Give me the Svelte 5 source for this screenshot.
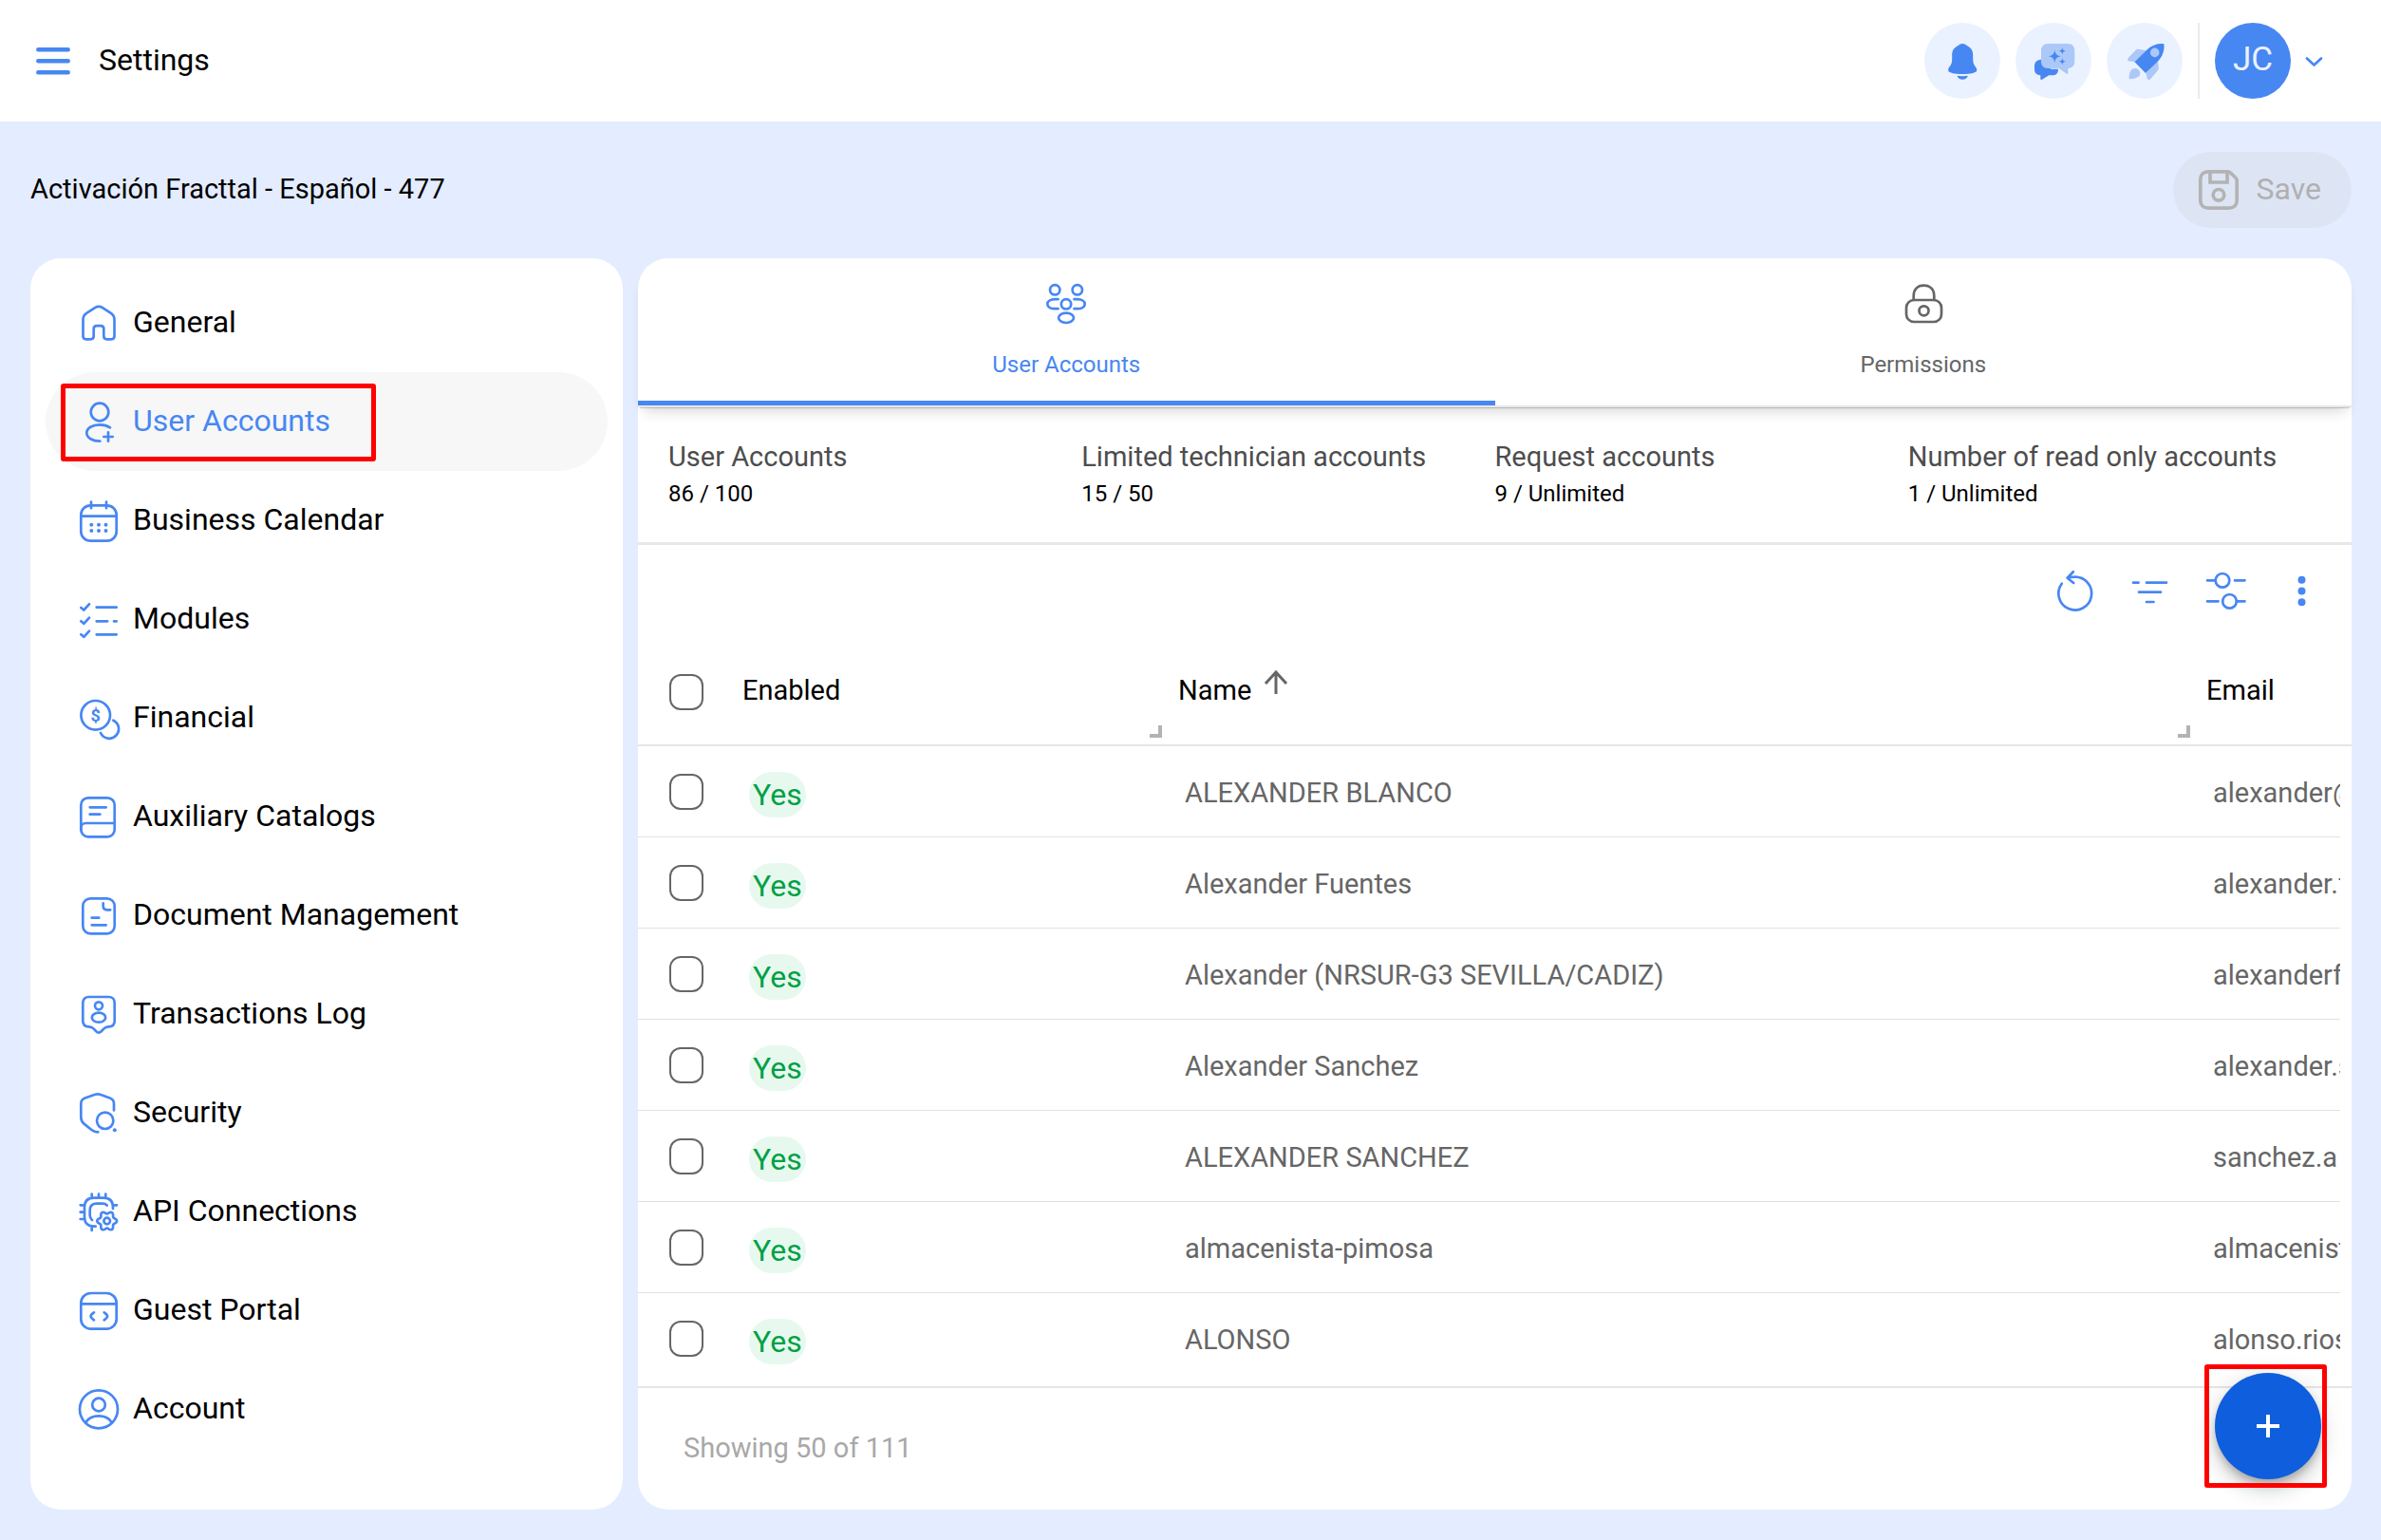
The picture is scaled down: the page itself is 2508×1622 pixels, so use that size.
<script>
	const navItems = [
		"General",
		"User Accounts",
		"Business Calendar",
		"Modules",
		"Financial",
		"Auxiliary Catalogs",
		"Document Management",
		"Transactions Log",
		"Security",
		"API Connections",
		"Guest Portal",
		"Account",
	];

	const stats = [
		{ label: "User Accounts", value: "86 / 100" },
		{ label: "Limited technician accounts", value: "15 / 50" },
		{ label: "Request accounts", value: "9 / Unlimited" },
		{ label: "Number of read only accounts", value: "1 / Unlimited" },
	];

	const users = [
		{ name: "ALEXANDER BLANCO", email: "alexander@" },
		{ name: "Alexander Fuentes", email: "alexander.f" },
		{ name: "Alexander (NRSUR-G3 SEVILLA/CADIZ)", email: "alexanderf" },
		{ name: "Alexander Sanchez", email: "alexander.s" },
		{ name: "ALEXANDER SANCHEZ", email: "sanchez.a" },
		{ name: "almacenista-pimosa", email: "almacenist" },
		{ name: "ALONSO", email: "alonso.rios" },
	];

	let active = $state("User Accounts");
	let tab = $state("accounts");
	let selected = $state([]);

	// outline of a cog with six soft teeth
	function gear(cx, cy, r, depth) {
		let d = "";
		for (let a = 0; a < 360; a += 6) {
			const t = (a * Math.PI) / 180;
			const rr = r + depth * Math.cos(6 * t);
			d += `${a ? "L" : "M"}${(cx + rr * Math.cos(t)).toFixed(2)} ${(cy + rr * Math.sin(t)).toFixed(2)}`;
		}
		return d + "z";
	}

	function toggleAll(e) {
		selected = e.target.checked ? users.map((u) => u.name) : [];
	}
</script>

{#snippet navIcon(name)}
	<svg class="icon" viewBox="0 0 48 48" aria-hidden="true">
		{#if name === "General"}
			<path d="M7.5 38V20.5c0-3 1.5-5.2 4-6.8l8.5-5.6c2.6-1.6 5.4-1.6 8 0l8.5 5.6c2.5 1.6 4 3.8 4 6.800V38c0 2-1.3 3.3-3.3 3.3h-4.6c-2 0-3.3-1.3-3.3-3.3v-7.6c0-2-1.3-3.3-3.3-3.3h-4c-2 0-3.3 1.3-3.3 3.3V38c0 2-1.3 3.3-3.3 3.3h-4.6c-2 0-3.3-1.3-3.3-3.3z" />
		{:else if name === "User Accounts"}
			<circle cx="25" cy="14" r="9.3" />
			<path d="M36 30.3c-3-2-7-3-11-3-7.5 0-13.7 3.6-13.7 8.7s6.2 8.7 14 8.7M34 35.3v9.4M29.3 40h9.4" />
		{:else if name === "Business Calendar"}
			<rect x="5.3" y="8.3" width="37.4" height="37.4" rx="10" />
			<path d="M5.3 19.7h37.4M16 4.7v6.5M32 4.7v6.5" />
			<g class="solid">
				<circle cx="16.3" cy="28.7" r="2" /><circle cx="24" cy="28.7" r="2" /><circle cx="31.5" cy="28.7" r="2" />
				<circle cx="16.3" cy="35" r="2" /><circle cx="24" cy="35" r="2" /><circle cx="31.5" cy="35" r="2" />
			</g>
		{:else if name === "Modules"}
			<path d="M5.3 12l3 2.5L14 8.3M5.3 26.3l3 2.5L14 22.6M5.3 40.3l3 2.5L14 36.6M21.7 11.7h21M21.7 26.3h11.5M40 26.3h2.7M21.7 40.3h21" />
		{:else if name === "Financial"}
			<circle cx="20.7" cy="21.3" r="15.3" />
			<path d="M39.3 26.7a10 10 0 1 1-13.3 13.3" />
			<text x="20.7" y="27.5" text-anchor="middle">$</text>
		{:else if name === "Auxiliary Catalogs"}
			<rect x="5.3" y="4.3" width="35.4" height="41" rx="7.5" />
			<path d="M5.3 38v-2c0-3 2-5 5-5h30.4M14.7 14.3h17M14.7 21.7h10.6" />
		{:else if name === "Document Management"}
			<rect x="7.3" y="6.3" width="33.4" height="37" rx="8" />
			<path d="M28.7 11.3v3c0 2.5 1.5 4 4 4h3.5M16.7 26.7h7.6M16.7 34.3h15" />
		{:else if name === "Transactions Log"}
			<path d="M13.5 6h21c3.8 0 6.2 2.4 6.2 6.2v19c0 3.8-2.4 6-6.2 6.2-2 .1-3.5.5-5 2l-2.8 2.9c-1.7 1.7-3.7 1.7-5.4 0l-2.8-2.9c-1.5-1.5-3-1.9-5-2-3.8-.2-6.2-2.4-6.2-6.2v-19C7.3 8.4 9.7 6 13.5 6z" />
			<circle cx="24" cy="15.3" r="4" />
			<ellipse cx="24" cy="27.7" rx="7.2" ry="5" />
		{:else if name === "Security"}
			<path d="M40 21.5v-7c0-3-1.5-5-4.3-6L25.5 4.8c-1.8-.7-3.5-.7-5.3 0L9.6 8.5c-2.8 1-4.3 3-4.3 6v14.3c0 3 1 5 3.2 6.8l8.3 6.7c2 1.6 3.7 2.1 6.5 2" />
			<circle cx="30.7" cy="32.3" r="8.7" />
			<circle class="solid" cx="40.8" cy="42.3" r="2" />
		{:else if name === "API Connections"}
			<path d="M20.7 39.7H19c-6.5 0-10-3.5-10-10V19.7c0-6.5 3.5-10 10-10h10c6.5 0 10 3.5 10 10v1.3M16.7 5.7v4M24 5.7v4M31.3 5.7v4M4.7 17.3H9M4.7 24.7H9M4.7 32H9M39 17.3h4M16.7 39.5V44" />
			<path d="M32.7 17.5c-1.3-1.3-2.5-1.8-4.7-1.8h-6c-5 0-7.3 2.3-7.3 7.3v5c0 2.2.6 3.7 2.3 5" />
			<path d={gear(32.7, 34, 9, 1.4)} />
			<circle cx="32.7" cy="34" r="3.3" />
		{:else if name === "Guest Portal"}
			<rect x="5.3" y="6" width="37.4" height="37.7" rx="10.5" />
			<path d="M5.3 17.3h37.4M19 26.3c-4.6 3-4.6 5 0 8M29.7 26.3c4.6 3 4.6 5 0 8" />
		{:else}
			<circle cx="24" cy="24.3" r="20" />
			<circle cx="24" cy="19.5" r="6.8" />
			<path d="M10.7 37.7c2.5-4 7.3-6.3 13.3-6.3s10.8 2.3 13.3 6.3" />
		{/if}
	</svg>
{/snippet}

<div class="page">
	<header>
		<button class="plain" aria-label="Menu">
			<svg class="icon" viewBox="0 0 48 48">
				<path class="thick" d="M8.3 12.3h31.4M8.3 24.3h31.4M8.3 36.3h31.4" />
			</svg>
		</button>
		<h1>Settings</h1>
		<div class="actions">
			<button class="round" aria-label="Notifications">
				<svg viewBox="0 0 48 48" width="48" height="48" fill="#4787f2">
					<path d="M24.2 6c2 0 3.3 1 4.5 1.9 4.2 2 6.5 5.1 6.5 9.6v5c0 7 4.1 7.5 4.1 11.5 0 2.5-6.1 4-15.1 4s-15.1-1.5-15.1-4c0-4 4.100-4.5 4.100-11.5v-5c0-4.5 2.300-7.6 6.500-9.6C20.9 7 22.200 6 24.200 6z" />
					<path d="M18.5 39.700c3.7.6 7.7.6 11.4 0-.7 2.500-3 4-5.700 4s-5-1.500-5.700-4z" />
				</svg>
			</button>
			<button class="round" aria-label="Assistant">
				<svg viewBox="0 0 48 48" width="48" height="48" fill="#4787f2">
					<path d="M12 22.7h9v10h8c0 4.3-2 6.5-5.5 6.5h-4.200L12 43.700c-.9.500-1.700.2-1.700-.8v-3.700C6.500 39 4 37 4 33v-3.500c0-4.300 3-6.800 8-6.800z" />
					<path fill="#abc8f8" d="M18.5 6h20.300c4.800 0 7.500 2.700 7.500 7.500v11c0 4.500-2.300 7.200-6.900 7.500v4.800c0 1-.7 1.400-1.500.9L29.500 32h-11c-4.800 0-7.500-2.700-7.500-7.500v-11C11 8.700 13.700 6 18.500 6z" />
					<path d="M25.300 12.500c.9 4.800 2 5.900 6.800 6.800-4.800.9-5.900 2-6.800 6.800-.9-4.800-2-5.900-6.800-6.800 4.800-.9 5.900-2 6.800-6.800zM33.300 10.200c.5 2.400 1.100 3 3.500 3.500-2.400.5-3 1.100-3.500 3.500-.5-2.400-1.100-3-3.500-3.500 2.400-.5 3-1.100 3.500-3.500zM33.300 21.200c.5 2.400 1.100 3 3.500 3.500-2.400.5-3 1.100-3.500 3.500-.5-2.400-1.100-3-3.500-3.500 2.400-.5 3-1.100 3.500-3.500z" />
				</svg>
			</button>
			<button class="round" aria-label="What's new">
				<svg viewBox="0 0 48 48" width="48" height="48" fill="#abc8f8">
					<path d="M25.500 12.900l-8.300-1.200c-1-.1-1.600.2-2.300.9L7 20.700c-1.800 2-.9 3.600 1.500 3.900l5.500.6zM37.800 22.500l1 9c.1 1.200-.2 2-1 2.800l-7.300 8.700c-1.800 2-4.200 1-4.200-1.700L25.500 37zM8.700 43.200c-1.100 0-1.200-.5-1.100-1.500.2-5.700 2-9.700 6.400-9.700 3 0 5.300 2.300 5.300 5.300 0 4-4.600 5.600-10.600 5.900z" />
					<path fill="#4787f2" d="M13.500 25.300L26.800 12C32 7.300 37.600 5.700 43 6c1.100.1 1.400.4 1.500 1.500.3 5.600-1.300 11.200-6 16.400L25 37z" />
					<circle cx="34.700" cy="15.400" r="4.800" />
				</svg>
			</button>
			<span class="divider"></span>
			<button class="avatar">JC</button>
			<button class="plain" aria-label="Account menu">
				<svg class="icon" viewBox="0 0 48 48"><path d="M17 21.5l7.500 7 7.500-7" /></svg>
			</button>
		</div>
	</header>

	<div class="subheader">
		<h2>Activación Fracttal - Español - 477</h2>
		<button class="save" disabled>
			<svg viewBox="0 0 48 48" width="48" height="48" fill="none" stroke="#b3b3b3" stroke-width="3.7">
				<path d="M34.3 4.8H13c-5 0-8.2 3.2-8.2 8.2v22c0 5 3.2 8.2 8.2 8.2h22c5 0 8.2-3.2 8.2-8.2V13.7c0-2-8-8.900-8.900-8.900z" />
				<path d="M15 4.8V16h18V4.8" />
				<circle cx="24" cy="29.3" r="5.8" />
			</svg>
			<span class="label">Save</span>
		</button>
	</div>

	<main>
		<nav class="card">
			{#each navItems as item}
				<a
					href="#{item.toLowerCase().replaceAll(' ', '-')}"
					class:active={active === item}
					onclick={() => (active = item)}
				>
					{@render navIcon(item)}
					<span class="label">{item}</span>
					{#if item === "User Accounts"}
						<span class="mark nav-mark"></span>
					{/if}
				</a>
			{/each}
		</nav>

		<section class="card content">
			<div class="tabs" role="tablist">
				<button role="tab" aria-selected={tab === "accounts"} onclick={() => (tab = "accounts")}>
					<svg class="icon" viewBox="0 0 48 48" aria-hidden="true">
						<circle cx="12.2" cy="9.3" r="5.2" />
						<circle cx="35.8" cy="9.3" r="5.2" />
						<circle cx="24" cy="24.3" r="5.2" />
						<ellipse cx="24" cy="38.8" rx="8" ry="5.2" />
						<path d="M15.5 19.2h-3.3c-4.5 0-7.9 2-7.9 5s3.4 5 7.9 5h3.3M32.5 19.2h3.3c4.5 0 7.9 2 7.9 5s-3.4 5-7.9 5h-3.3" />
					</svg>
					User Accounts
				</button>
				<button role="tab" aria-selected={tab === "permissions"} onclick={() => (tab = "permissions")}>
					<svg class="icon" viewBox="0 0 48 48" aria-hidden="true">
						<rect x="6" y="20" width="37" height="23" rx="8" />
						<path d="M13.7 20v-4c0-7 4-11.3 10.8-11.3S35.3 9 35.3 16v4" />
						<circle cx="24.5" cy="31.3" r="5" />
					</svg>
					Permissions
				</button>
			</div>

			<dl class="stats">
				{#each stats as stat}
					<div>
						<dt>{stat.label}</dt>
						<dd>{stat.value}</dd>
					</div>
				{/each}
			</dl>

			<div class="toolbar">
				<button class="plain" aria-label="Refresh">
					<svg class="icon" viewBox="0 0 48 48">
						<path d="M10.8 14.7A17.4 17.4 0 1 0 24 7.7c-2.5 0-5 .3-7.2 1M22.8 2.3l-6.2 6.4 6.6 5.3" />
					</svg>
				</button>
				<button class="plain" aria-label="Filter">
					<svg class="icon" viewBox="0 0 48 48">
						<path d="M6 13.7h5.5M20 13.7h21M12 23.7h23M20 34h7.5" />
					</svg>
				</button>
				<button class="plain" aria-label="Columns">
					<svg class="icon" viewBox="0 0 48 48">
						<path d="M4 11.3h8.5M33 11.3h10.5M4 33.3h11.5M35 33.3h8.5" />
						<circle cx="20" cy="11.3" r="7.3" />
						<circle cx="27.5" cy="33.3" r="7.3" />
					</svg>
				</button>
				<button class="plain" aria-label="More options">
					<svg viewBox="0 0 48 48" width="48" height="48" fill="#4787f2">
						<circle cx="23.5" cy="10.7" r="4" />
						<circle cx="23.5" cy="22.5" r="4" />
						<circle cx="23.5" cy="34.3" r="4" />
					</svg>
				</button>
			</div>

			<div class="grid">
				<table>
					<colgroup>
						<col class="col-check" />
						<col class="col-enabled" />
						<col />
						<col class="col-email" />
						<col class="col-gutter" />
					</colgroup>
					<thead>
						<tr>
							<th>
								<input
									type="checkbox"
									aria-label="Select all"
									checked={selected.length === users.length}
									onchange={toggleAll}
								/>
							</th>
							<th>Enabled<span class="resize"></span></th>
							<th>
								Name
								<svg class="sort" viewBox="0 0 32 32" aria-hidden="true">
									<path d="M16 28V6M5 17L16 5l11 12" />
								</svg>
								<span class="resize"></span>
							</th>
							<th>Email</th>
							<td></td>
						</tr>
					</thead>
					<tbody>
						{#each users as user}
							<tr>
								<td>
									<input
										type="checkbox"
										aria-label="Select {user.name}"
										value={user.name}
										bind:group={selected}
									/>
								</td>
								<td><span class="pill">Yes</span></td>
								<td>{user.name}</td>
								<td>{user.email}</td>
								<td></td>
							</tr>
						{/each}
					</tbody>
				</table>
			</div>

			<footer>Showing 50 of 111</footer>

			<div class="fab">
				<button aria-label="Add user account">
					<svg viewBox="0 0 26 26" width="26" height="26" stroke="#fff" stroke-width="4">
						<path d="M13 1v24M1 13h24" />
					</svg>
				</button>
				<span class="mark fab-mark"></span>
			</div>
		</section>
	</main>
</div>

<style>
	:global(body) {
		margin: 0;
	}
	.page {
		min-height: 100vh;
		display: flex;
		flex-direction: column;
		background: #e4ecff;
		color: #000;
		font-family: Roboto, "Liberation Sans", sans-serif;
		font-size: 29px;
	}
	.page,
	.page * {
		box-sizing: border-box;
	}
	button {
		font: inherit;
		border: none;
		padding: 0;
		cursor: pointer;
	}
	.plain {
		display: flex;
		background: none;
	}
	.icon {
		width: 48px;
		height: 48px;
		flex: none;
		fill: none;
		stroke: #4787f2;
		stroke-width: 2.7;
		stroke-linecap: round;
		stroke-linejoin: round;
	}
	.icon .solid {
		fill: #4787f2;
		stroke: none;
	}
	.icon .thick {
		stroke-width: 4.5;
	}
	.icon text {
		fill: #4787f2;
		stroke: none;
		font-size: 18px;
		font-weight: 700;
	}
	header {
		height: 128px;
		display: flex;
		align-items: center;
		gap: 24px;
		padding: 0 47px 0 32px;
		background: #fff;
	}
	h1,
	h2 {
		margin: 0;
		padding-bottom: 3px;
		font-weight: 400;
	}
	h1 {
		font-size: 32px;
	}
	h2 {
		font-size: 29px;
	}
	.label {
		padding-bottom: 3px;
	}
	.actions {
		margin-left: auto;
		display: flex;
		align-items: center;
		gap: 16px;
	}
	.actions .plain {
		margin-left: -16px;
	}
	.round,
	.avatar {
		width: 80px;
		height: 80px;
		border-radius: 50%;
		display: flex;
		align-items: center;
		justify-content: center;
		background: #ebf2ff;
	}
	.avatar {
		padding-bottom: 3px;
		background: #4787f2;
		color: #ebf2ff;
		font-size: 35px;
	}
	.divider {
		width: 2px;
		height: 80px;
		background: #ebebeb;
	}
	.subheader {
		display: flex;
		align-items: center;
		justify-content: space-between;
		padding: 32px 31px 32px 32px;
	}
	.save {
		height: 80px;
		display: flex;
		align-items: center;
		gap: 16px;
		padding: 0 32px 0 24px;
		border-radius: 40px;
		background: #dde5f5;
		color: #b0b0b0;
		font-size: 32px;
	}
	main {
		flex: 1;
		display: flex;
		gap: 16px;
		padding: 0 31px 32px 32px;
	}
	.card {
		background: #fff;
		border-radius: 32px;
	}
	nav {
		width: 624px;
		flex: none;
		padding: 16px;
	}
	nav a {
		position: relative;
		height: 104px;
		display: flex;
		align-items: center;
		gap: 12px;
		padding: 0 32px;
		border-radius: 52px;
		color: #000;
		font-size: 32px;
		text-decoration: none;
	}
	nav a.active {
		background: #f7f7f7;
		color: #4787f2;
	}
	.mark {
		position: absolute;
		border: 5px solid #f00;
		border-radius: 3px;
		pointer-events: none;
	}
	.nav-mark {
		inset: 12px auto 10px 16px;
		width: 332px;
	}
	.content {
		position: relative;
		flex: 1;
		min-width: 0;
		display: flex;
		flex-direction: column;
	}
	.tabs {
		display: flex;
		border-bottom: 2px solid #e8e8e8;
		border-radius: 32px 32px 0 0;
		box-shadow:
			0 10px 14px -6px rgba(0, 0, 0, 0.16),
			0 3px 1px -2px rgba(0, 0, 0, 0.2);
	}
	.tabs button {
		flex: 1;
		display: flex;
		flex-direction: column;
		align-items: center;
		gap: 24px;
		padding: 24px 0 22px;
		border-bottom: 5px solid transparent;
		background: none;
		color: #666;
		font-size: 24px;
		line-height: 32px;
	}
	.tabs .icon {
		stroke: #666;
	}
	.tabs button[aria-selected="true"] {
		border-color: #4787f2;
		color: #4787f2;
	}
	.tabs button[aria-selected="true"] .icon {
		stroke: #4787f2;
	}
	.stats {
		display: grid;
		grid-template-columns: repeat(4, 1fr);
		margin: 0;
		padding: 32px;
		border-bottom: 3px solid #e8e8e8;
		line-height: 40px;
	}
	.stats dt {
		color: #4d4d4d;
	}
	.stats dd {
		margin: 0;
		font-size: 24px;
		line-height: 38px;
	}
	.toolbar {
		display: flex;
		justify-content: flex-end;
		gap: 32px;
		padding: 26px 28px;
	}
	.grid {
		flex: 1;
	}
	table {
		width: 100%;
		table-layout: fixed;
		border-collapse: separate;
		border-spacing: 0;
	}
	.col-check {
		width: 94px;
	}
	.col-enabled {
		width: 459px;
	}
	.col-email {
		width: 157px;
	}
	.col-gutter {
		width: 12px;
	}
	thead th,
	thead td {
		position: relative;
		height: 112px;
		padding: 0 16px;
		border-bottom: 2px solid #e6e6e6;
		font-weight: 400;
		text-align: left;
		white-space: nowrap;
	}
	thead th:nth-child(n + 2) {
		padding-bottom: 4px;
	}
	tbody td {
		height: 96px;
		padding: 2px 0 0 23px;
		border-bottom: 1px solid #e2e2e2;
		color: #666;
		overflow: hidden;
		white-space: nowrap;
	}
	tbody td:nth-child(2) {
		padding-top: 6px;
	}
	th:first-child,
	tbody td:first-child {
		padding: 0 0 0 33px;
	}
	tbody td:last-child,
	tbody tr:last-child td {
		border-bottom-color: transparent;
	}
	input[type="checkbox"] {
		appearance: none;
		display: block;
		width: 36px;
		height: 38px;
		margin: 0;
		border: 2px solid #666;
		border-radius: 12px;
		background: #fff;
	}
	input[type="checkbox"]:checked {
		border-color: #4787f2;
		background: #4787f2;
	}
	.resize {
		position: absolute;
		right: 1px;
		bottom: 7px;
		width: 13px;
		height: 13px;
		border: solid #b3b3b3;
		border-width: 0 4px 4px 0;
	}
	.sort {
		width: 32px;
		height: 32px;
		margin: -8px 0 0 3px;
		vertical-align: 2px;
		fill: none;
		stroke: #666;
		stroke-width: 3;
	}
	.pill {
		display: inline-block;
		height: 48px;
		padding: 0 4px;
		border-radius: 24px;
		background: #e7f9ee;
		color: #00a045;
		font-size: 32px;
		line-height: 48px;
	}
	footer {
		height: 130px;
		display: flex;
		align-items: center;
		padding: 0 48px 2px;
		border-top: 2px solid #e6e6e6;
		color: #a8a8a8;
	}
	.fab {
		position: absolute;
		right: 32px;
		bottom: 32px;
	}
	.fab button {
		width: 112px;
		height: 112px;
		display: flex;
		align-items: center;
		justify-content: center;
		border-radius: 50%;
		background: #0f5edd;
		box-shadow:
			0 6px 10px -2px rgba(0, 0, 0, 0.25),
			0 12px 20px rgba(0, 0, 0, 0.14),
			0 2px 34px rgba(0, 0, 0, 0.08);
	}
	.fab-mark {
		inset: -9px -6px -9px -11px;
	}
</style>
